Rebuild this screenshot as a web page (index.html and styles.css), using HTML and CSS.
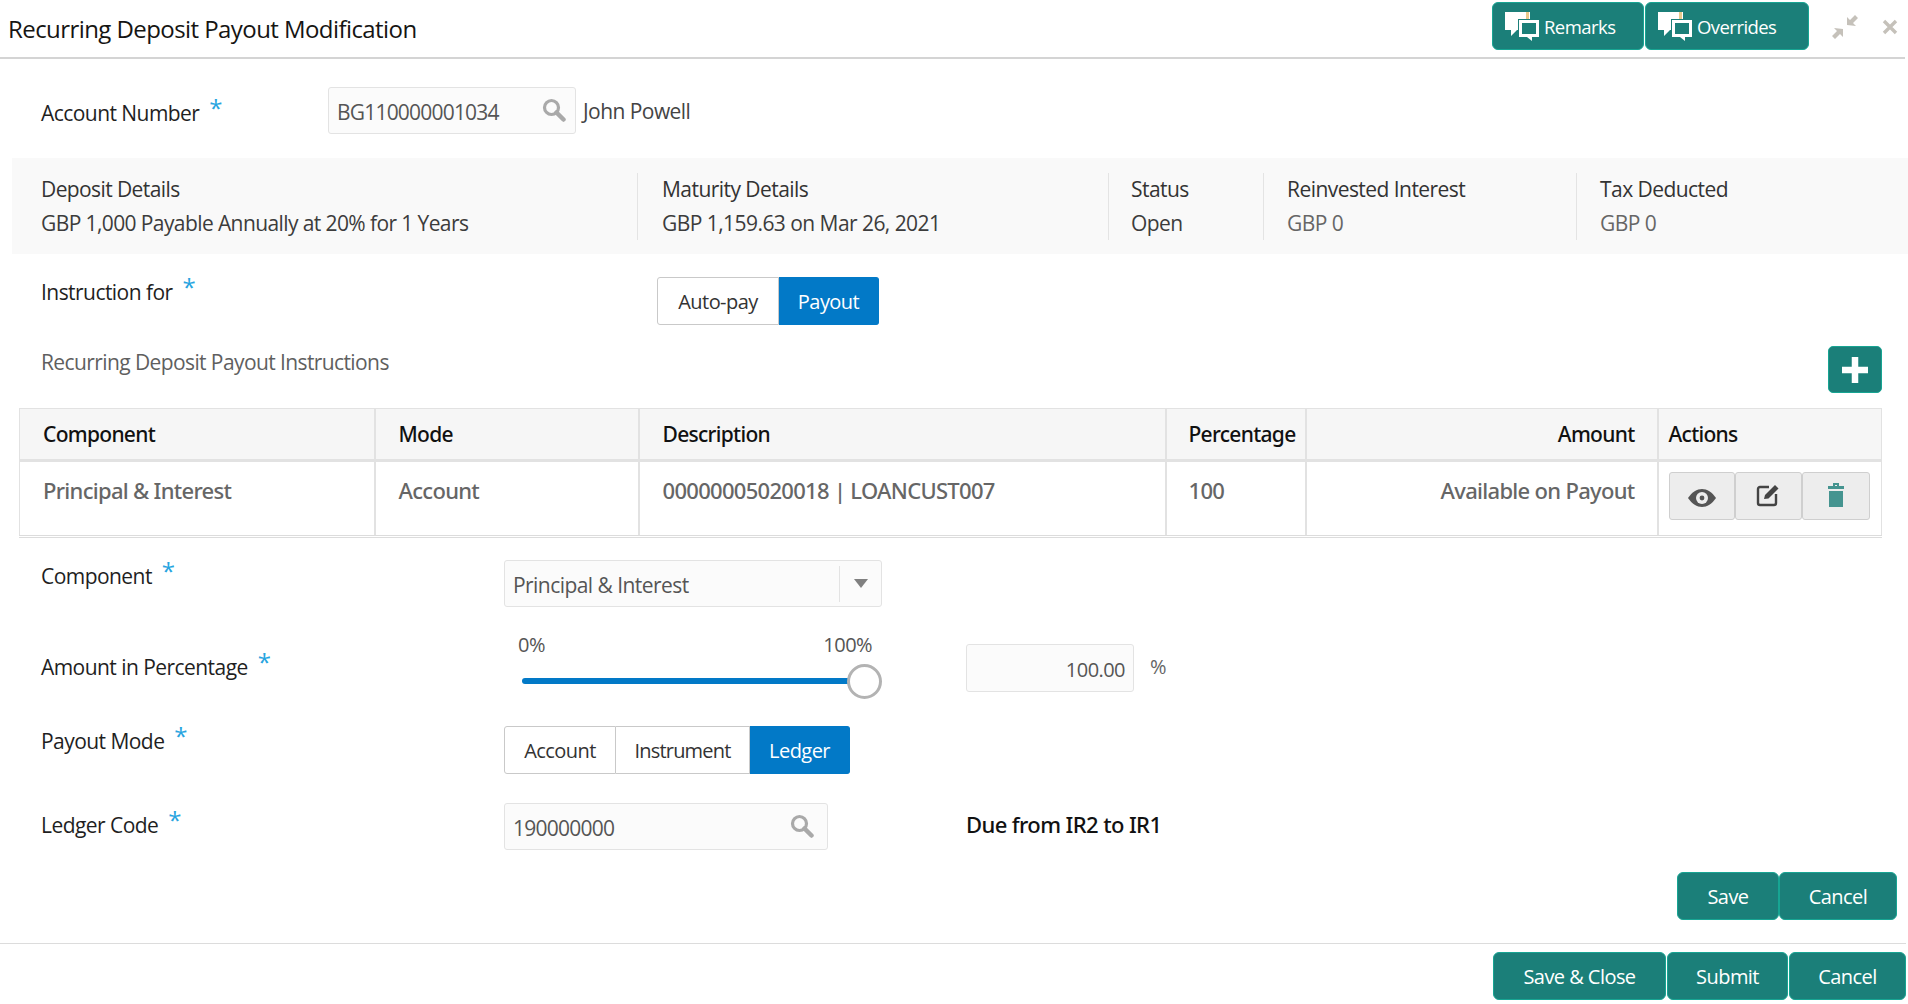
FILE: index.html
```html
<!DOCTYPE html>
<html lang="en">
<head>
<meta charset="utf-8">
<title>Recurring Deposit Payout Modification</title>
<link rel="stylesheet" href="styles.css">
</head>
<body>
<svg class="defs" width="0" height="0" aria-hidden="true">
  <defs>
    <symbol id="chat" viewBox="0 0 36 30">
      <path d="M1 1h25v7H14v11h-1l-6 6v-6H1z" fill="#fff"/>
      <path d="M22 1h3v7h-3z" fill="#e8c98c"/>
      <path d="M15 9h20v17h-7v4l-5-4h-8z" fill="#fff"/>
      <path d="M18 12h14v11H18z" fill="#1b7f79"/>
    </symbol>
    <symbol id="search" viewBox="0 0 24 24">
      <circle cx="9.5" cy="9.5" r="7" fill="none" stroke="currentColor" stroke-width="3.2"/>
      <path d="M14.500 14.500l7 7" stroke="currentColor" stroke-width="4.500" stroke-linecap="round"/>
    </symbol>
  </defs>
</svg>
<div class="page">
  <header class="topbar">
    <h1 class="title">Recurring Deposit Payout Modification</h1>
    <div class="topbar-actions">
      <div class="btn-row">
        <button class="btn btn-remarks"><svg class="chat-icon"><use href="#chat"/></svg>Remarks</button>
        <button class="btn btn-overrides"><svg class="chat-icon"><use href="#chat"/></svg>Overrides</button>
      </div>
      <svg class="win-compress" viewBox="0 0 26 24"><path d="M15 10V2l3 3 5-5 3 3-5 5 3 3zM11 14v8l-3-3-5 5-3-3 5-5-3-3z" fill="#c5c1ba"/></svg>
      <svg class="win-close" viewBox="0 0 16 16"><path d="M2 2l12 12M14 2L2 14" stroke="#c5c1ba" stroke-width="3.4"/></svg>
    </div>
  </header>

  <div class="account-row">
    <label class="label label-account">Account Number <span class="req">*</span></label>
    <div class="input input-account">
      <span>BG110000001034</span>
      <svg class="search-icon"><use href="#search"/></svg>
    </div>
    <span class="account-name">John Powell</span>
  </div>

  <section class="summary">
    <div class="sum sum-1"><div class="sum-h">Deposit Details</div><div class="sum-v dark">GBP 1,000 Payable Annually at 20% for 1 Years</div></div>
    <div class="sum sum-2"><div class="sum-h">Maturity Details</div><div class="sum-v dark">GBP 1,159.63 on Mar 26, 2021</div></div>
    <div class="sum sum-3"><div class="sum-h">Status</div><div class="sum-v dark">Open</div></div>
    <div class="sum sum-4"><div class="sum-h">Reinvested Interest</div><div class="sum-v">GBP 0</div></div>
    <div class="sum sum-5"><div class="sum-h">Tax Deducted</div><div class="sum-v">GBP 0</div></div>
  </section>

  <div class="instr-row">
    <label class="label label-instr">Instruction for <span class="req">*</span></label>
    <div class="seg">
      <span class="seg-item seg-auto">Auto-pay</span>
      <span class="seg-item seg-on seg-payout">Payout</span>
    </div>
  </div>

  <div class="heading-row">
    <span class="subheading">Recurring Deposit Payout Instructions</span>
    <button class="btn-add" aria-label="Add"><svg viewBox="0 0 24 24" width="26" height="26"><path d="M9 0h6v9h9v6h-9v9H9v-9H0V9h9z" fill="#fff"/></svg></button>
  </div>

  <table class="grid">
    <colgroup>
      <col class="c1"><col class="c2"><col class="c3"><col class="c4"><col class="c5"><col class="c6">
    </colgroup>
    <thead>
      <tr><th>Component</th><th>Mode</th><th>Description</th><th class="tight">Percentage</th><th class="num">Amount</th><th class="act-h">Actions</th></tr>
    </thead>
    <tbody>
      <tr>
        <td>Principal &amp; Interest</td>
        <td>Account</td>
        <td>00000005020018 | LOANCUST007</td>
        <td class="tight">100</td>
        <td class="num">Available on Payout</td>
        <td class="act-cell">
          <div class="acts">
            <button class="act act-view" aria-label="View"><svg viewBox="0 0 28 18" width="28" height="18"><path d="M0 9C4 3 9 0 14 0s10 3 14 9c-4 6-9 9-14 9S4 15 0 9z" fill="#555"/><circle cx="14" cy="9" r="6" fill="#ededed"/><circle cx="14" cy="9" r="2.4" fill="#555"/></svg></button>
            <button class="act act-edit" aria-label="Edit"><svg viewBox="0 0 24 24" width="24" height="24"><path d="M13 4H4a2 2 0 0 0-2 2v14a2 2 0 0 0 2 2h14a2 2 0 0 0 2-2v-9" fill="none" stroke="#444" stroke-width="2.4"/><path d="M9 12L19 2l3.500 3.500-10 10L8 16z" fill="#444"/></svg></button>
            <button class="act act-del" aria-label="Delete"><svg viewBox="0 0 16 24" width="16" height="24"><path d="M5 0h6v3h5v3H0V3h5zM7 2v1h2V2zM1 8h14v16H1z" fill="#459490"/></svg></button>
          </div>
        </td>
      </tr>
    </tbody>
  </table>

  <div class="form-grid">
    <label class="label fl-component">Component <span class="req">*</span></label>
    <div class="input select">
      <span>Principal &amp; Interest</span>
      <span class="select-arrow"><i class="caret"></i></span>
    </div>

    <label class="label fl-amount">Amount in Percentage <span class="req">*</span></label>
    <div class="slider-wrap">
      <div class="slider-labels"><span>0%</span><span>100%</span></div>
      <div class="slider">
        <div class="track"></div>
        <div class="thumb"></div>
      </div>
    </div>
    <div class="pct-cell">
      <div class="input input-pct">100.00</div>
      <span class="pct-sign">%</span>
    </div>

    <label class="label fl-mode">Payout Mode <span class="req">*</span></label>
    <div class="seg seg-mode">
      <span class="seg-item seg-account">Account</span>
      <span class="seg-item seg-instrument">Instrument</span>
      <span class="seg-item seg-on seg-ledger">Ledger</span>
    </div>

    <label class="label fl-ledger">Ledger Code <span class="req">*</span></label>
    <div class="input input-ledger">
      <span>190000000</span>
      <svg class="search-icon search-ledger"><use href="#search"/></svg>
    </div>
    <div class="due">Due from IR2 to IR1</div>
  </div>

  <div class="inner-actions">
    <button class="btn btn-save">Save</button>
    <button class="btn btn-cancel">Cancel</button>
  </div>

  <footer class="footer">
    <button class="btn btn-saveclose">Save &amp; Close</button>
    <button class="btn btn-submit">Submit</button>
    <button class="btn btn-cancel2">Cancel</button>
  </footer>
</div>
</body>
</html>
```
FILE: styles.css
```css
* { box-sizing: border-box; }
html, body { margin: 0; padding: 0; background: #fff; }
body { font-family: "Open Sans", "Noto Sans", sans-serif; font-size: 21px; color: #2b2b2b; letter-spacing: -0.55px; }
.defs { display: block; height: 0; }
.page { width: 1908px; height: 1004px; overflow: hidden; display: flex; flex-direction: column; }

.topbar { height: 59px; width: 1905px; border-bottom: 2px solid #d4d4d4; display: flex; justify-content: space-between; padding: 2px 7px 0 8px; }
.title { margin: 5px 0 0; font-size: 24px; font-weight: 400; color: #161513; line-height: 44px; letter-spacing: -0.57px; }
.topbar-actions { display: flex; align-items: flex-start; }
.btn-row { display: flex; }
.btn { height: 48px; background: #1b7f79; border: 1px solid #17a593; border-radius: 6px; color: #fff; font: inherit; font-size: 20px; letter-spacing: inherit; padding: 0; display: inline-flex; align-items: center; justify-content: center; }
.btn-remarks { width: 152px; margin-right: 1px; font-size: 18.5px; justify-content: flex-start; padding-left: 11px; }
.btn-overrides { width: 164px; font-size: 18.5px; justify-content: flex-start; padding-left: 11px; }
.chat-icon { width: 36px; height: 30px; margin-right: 4px; }
.win-compress { width: 26px; height: 24px; margin: 13px 0 0 23px; }
.win-close { width: 16px; height: 16px; margin: 17px 0 0 24px; }

.account-row { margin-top: 28px; height: 47px; display: flex; align-items: flex-start; }
.label { color: #1f1f1f; line-height: 28px; display: block; }
.label-account { width: 287px; margin: 12px 0 0 41px; }
.req { color: #27a4e0; font-size: 24px; line-height: 0; position: relative; top: -4px; margin-left: 5px; }
.input { background: #fbfbfb; border: 1px solid #e3e3e3; border-radius: 3px; height: 47px; color: #555; display: flex; align-items: center; justify-content: space-between; padding: 3px 8px 0; }
.input-account { width: 248px; padding-right: 9px; letter-spacing: -0.8px; }
.search-icon { width: 24px; height: 24px; color: #a9a9a9; margin: -5px 0 0 0; flex: none; }
.account-name { margin: 10px 0 0 7px; color: #444; line-height: 28px; }

.summary { margin: 24px 0 0 12px; width: 1896px; height: 96px; background: #f9f9f9; display: flex; padding-top: 15px; }
.sum { height: 67px; border-right: 1px solid #e4e4e4; padding-left: 29px; }
.sum-1 { width: 626px; letter-spacing: -0.6px; }
.sum-2 { width: 471px; padding-left: 24px; }
.sum-3 { width: 155px; padding-left: 22px; }
.sum-4 { width: 313px; padding-left: 23px; }
.sum-5 { flex: 1; border-right: 0; padding-left: 23px; }
.sum-h { color: #333; line-height: 34px; margin-top: -1px; }
.sum-v { color: #666; line-height: 34px; }
.sum-v.dark { color: #3c3c3c; }

.instr-row { margin-top: 23px; height: 48px; display: flex; align-items: flex-start; }
.label-instr { width: 616px; margin: 1px 0 0 41px; }
.seg { display: flex; height: 48px; font-size: 20px; }
.seg-item { border: 1px solid #c9c9c9; border-left-width: 0; display: flex; align-items: center; justify-content: center; color: #333; background: #fff; }
.seg-item:first-child { border-left-width: 1px; border-radius: 3px 0 0 3px; }
.seg-item:last-child { border-radius: 0 3px 3px 0; }
.seg-on { background: #0279c7; border-color: #0279c7; color: #fff; }
.seg-auto { width: 122px; }
.seg-payout { width: 100px; }

.heading-row { margin-top: 21px; height: 47px; width: 1882px; display: flex; justify-content: space-between; align-items: flex-start; padding-left: 41px; }
.subheading { color: #5f5f5f; line-height: 28px; margin-top: 2px; letter-spacing: -0.6px; }
.btn-add { width: 54px; height: 47px; border: 1px solid #17a593; border-radius: 5px; background: #1b7f79; padding: 0; display: flex; align-items: center; justify-content: center; }

.grid { margin: 15px 0 0 19px; width: 1862px; border-collapse: collapse; table-layout: fixed; border: 1px solid #e2e2e2; border-bottom: 3px double #dcdcdc; }
.c1 { width: 355px; } .c2 { width: 264px; } .c3 { width: 527px; } .c4 { width: 140px; } .c5 { width: 352px; } .c6 { width: 224px; }
.grid th { height: 52px; background: #f6f6f6; border-left: 2px solid #e2e2e2; border-bottom: 3px solid #e2e2e2; font-family: "Noto Sans", "Open Sans", sans-serif; font-weight: 500; color: #111; text-align: left; padding: 0 23px; letter-spacing: -0.7px; }
.grid td { height: 76px; border-left: 2px solid #e2e2e2; color: #666; font-family: "Noto Sans", "Open Sans", sans-serif; font-size: 22px; font-weight: 500; vertical-align: top; padding: 13px 23px 0; line-height: 30px; letter-spacing: -0.7px; }
.grid th:first-child, .grid td:first-child { border-left: 0; }
.grid .num { text-align: right; padding-right: 22px; }
.grid .tight { padding-left: 22px; padding-right: 0; }
.grid .act-h { padding-left: 10px; padding-right: 0; }
.grid td.act-cell { padding: 10px 0 0 10px; }
.acts { display: flex; }
.act { height: 48px; background: #ededed; border: 1px solid #cfcfcf; border-radius: 3px; padding: 0; display: flex; align-items: center; justify-content: center; }
.act-view { width: 66px; } .act-view svg { margin-top: 4px; }
.act-edit { width: 67px; } .act-edit svg { margin-top: -2px; }
.act-del { width: 68px; } .act-del svg { margin-top: -2px; }

.form-grid { margin-top: 22px; display: grid; grid-template-columns: 504px 462px 1fr; grid-template-rows: 50px 90px 80px 71px; }
.fl-component { grid-column: 1; grid-row: 1; margin: 2px 0 0 41px; }
.select { grid-column: 2 / 4; grid-row: 1; width: 378px; padding-right: 0; }
.select-arrow { width: 42px; height: 36px; border-left: 1px solid #e3e3e3; display: flex; align-items: center; justify-content: center; margin-top: -3px; }
.caret { width: 0; height: 0; border-left: 7px solid transparent; border-right: 7px solid transparent; border-top: 9px solid #808080; }

.fl-amount { grid-column: 1; grid-row: 2; margin: 43px 0 0 41px; }
.slider-wrap { grid-column: 2; grid-row: 2; width: 378px; padding: 21px 0 0 14px; font-size: 20px; }
.slider-labels { display: flex; justify-content: space-between; color: #555; line-height: 28px; padding-right: 10px; }
.slider { position: relative; height: 35px; margin-top: 5px; }
.track { position: absolute; left: 4px; right: 30px; top: 14px; height: 6px; background: #0279c7; border-radius: 3px; }
.thumb { position: absolute; right: 0; top: 0; width: 35px; height: 35px; border: 3px solid #b3b3b3; border-radius: 50%; background: #fff; }
.pct-cell { grid-column: 3; grid-row: 2; display: flex; align-items: flex-start; padding-top: 34px; }
.input-pct { width: 168px; height: 48px; justify-content: flex-end; font-size: 20px; }
.pct-sign { margin: 9px 0 0 16px; color: #666; line-height: 28px; font-size: 20px; }

.fl-mode { grid-column: 1; grid-row: 3; margin: 27px 0 0 41px; }
.seg-mode { grid-column: 2 / 4; grid-row: 3; margin-top: 26px; }
.seg-account { width: 112px; } .seg-instrument { width: 134px; letter-spacing: -0.8px; } .seg-ledger { width: 100px; }

.fl-ledger { grid-column: 1; grid-row: 4; margin: 31px 0 0 41px; }
.input-ledger { grid-column: 2; grid-row: 4; width: 324px; margin-top: 23px; padding-right: 13px; letter-spacing: -0.75px; }
.search-ledger { margin-top: -4px; }
.due { grid-column: 3; grid-row: 4; margin-top: 30px; line-height: 28px; color: #111; font-family: "Noto Sans", "Open Sans", sans-serif; font-size: 22px; font-weight: 500; letter-spacing: -0.6px; }

.inner-actions { margin-top: 21px; width: 1897px; display: flex; justify-content: flex-end; }
.btn-save { width: 102px; }
.btn-cancel { width: 118px; }

.footer { margin-top: 23px; height: 61px; width: 1906px; border-top: 1px solid #dcdcdc; padding-top: 8px; display: flex; justify-content: flex-end; gap: 1px; }
.btn-saveclose { width: 173px; }
.btn-submit { width: 121px; }
.btn-cancel2 { width: 117px; }
```
